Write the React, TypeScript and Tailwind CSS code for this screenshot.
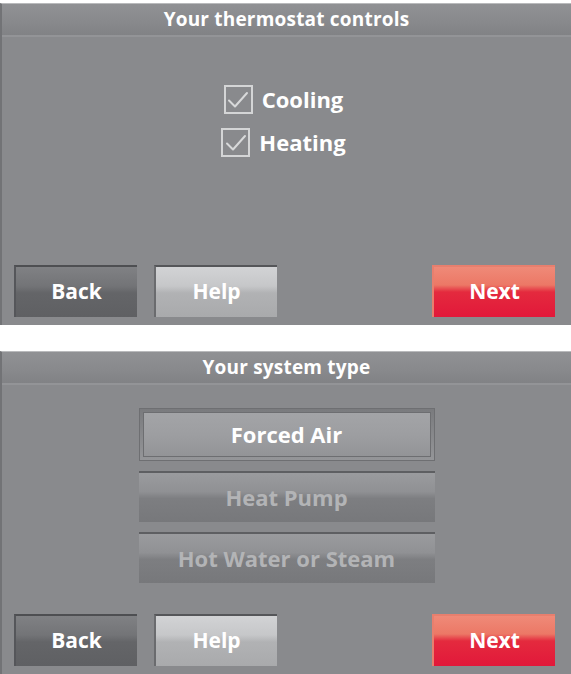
import React from 'react';

type Tone = 'dark' | 'light' | 'red';

const toneStyles: Record<Tone, string> = {
  dark: 'bg-[linear-gradient(to_bottom,#808184_0%,#737477_38%,#646568_52%,#5f6063_100%)] border-t-[#4e4f52] border-l-[#55565a]',
  light: 'bg-[linear-gradient(to_bottom,#d2d3d5_0%,#c6c7c9_38%,#b1b2b4_52%,#a9aaac_100%)] border-t-[#555659] border-l-[#6a6b6e]',
  red: 'bg-[linear-gradient(to_bottom,#ef8a78_0%,#ec7866_36%,#e42a3e_50%,#e2183a_100%)] border-t-[#e77f6e] border-l-[#e77f6e]',
};

function NavButton({ label, tone }: { label: string; tone: Tone }) {
  return (
    <button
      className={`w-[123px] h-[52px] border-t-2 border-l-2 flex items-center justify-center text-[21px] font-bold text-white ${toneStyles[tone]}`}
    >
      {label}
    </button>
  );
}

function Header({ title }: { title: string }) {
  return (
    <div className="h-[33px] flex items-center justify-center border-b-2 border-b-[#939497] bg-[linear-gradient(to_bottom,#909194_0%,#88898c_60%,#818285_100%)]">
      <span className="text-[19px] font-bold text-white tracking-[0.2px]">{title}</span>
    </div>
  );
}

function CheckRow({ label }: { label: string }) {
  return (
    <div className="flex items-center gap-[9px]">
      <div className="w-[29px] h-[29px] border-2 border-[#d4d5d6] flex items-center justify-center">
        <svg width="22" height="18" viewBox="0 0 22 18" fill="none">
          <path d="M2 9.5 L8 15.5 L20 2" stroke="#d8d9da" strokeWidth="2" strokeLinecap="round" strokeLinejoin="round" />
        </svg>
      </div>
      <span className="text-[22px] font-bold text-white">{label}</span>
    </div>
  );
}

function Option({ label, active }: { label: string; active?: boolean }) {
  if (active) {
    return (
      <div className="w-[296px] h-[53px] p-[3px] bg-[linear-gradient(to_bottom,#7a7b7e,#949598)] border border-[#6e6f72]">
        <div className="h-full flex items-center justify-center bg-[linear-gradient(to_bottom,#a3a4a7_0%,#9d9ea1_50%,#939497_100%)] border border-[#6d6e71]">
          <span className="text-[22px] font-bold text-white">{label}</span>
        </div>
      </div>
    );
  }
  return (
    <div className="w-[296px] h-[51px] flex items-center justify-center border-t-2 border-t-[#5e5f62] bg-[linear-gradient(to_bottom,#9a9b9e_0%,#909194_38%,#7d7e81_52%,#77787b_100%)]">
      <span className="text-[22px] font-bold text-[#b3b4b6]">{label}</span>
    </div>
  );
}

function Panel({ title, children, height }: { title: string; children: React.ReactNode; height: string }) {
  return (
    <div className={`${height} flex flex-col bg-[#898a8d] border-t border-t-[#b9babc] border-l-2 border-l-[#727376]`}>
      <Header title={title} />
      {children}
    </div>
  );
}

function NavRow() {
  return (
    <div className="flex items-center pl-[12px] pr-[16px] pb-[8px]">
      <NavButton label="Back" tone="dark" />
      <div className="ml-[17px]">
        <NavButton label="Help" tone="light" />
      </div>
      <div className="ml-auto">
        <NavButton label="Next" tone="red" />
      </div>
    </div>
  );
}

export default function App() {
  return (
    <div className="w-[571px] h-[674px] bg-white flex flex-col pt-[3px] font-['Open_Sans',sans-serif]">
      <Panel title="Your thermostat controls" height="h-[322px]">
        <div className="flex-1 flex flex-col items-center pt-[46px] gap-[10px] pr-[6px]">
          <CheckRow label="Cooling" />
          <CheckRow label="Heating" />
        </div>
        <NavRow />
      </Panel>
      <div className="h-[26px]" />
      <Panel title="Your system type" height="h-[323px]">
        <div className="flex-1 flex flex-col items-center pt-[23px] gap-[10px]">
          <Option label="Forced Air" active />
          <Option label="Heat Pump" />
          <Option label="Hot Water or Steam" />
        </div>
        <NavRow />
      </Panel>
    </div>
  );
}
